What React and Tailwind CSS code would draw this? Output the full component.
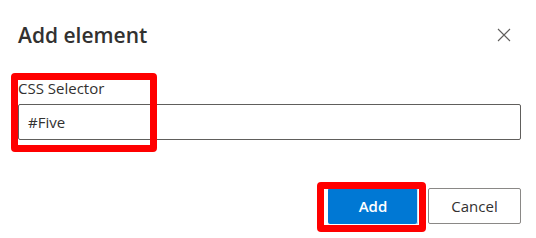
import React from "react";

export default function App() {
  return (
    <div
      className="relative w-[536px] h-[238px] bg-white pl-[18px] pr-[15px] pt-[21px] text-[#323130]"
      style={{ fontFamily: '"Open Sans", "Noto Sans", sans-serif' }}
    >
      <div className="flex items-center justify-between h-[28px]">
        <h1 className="text-[21px] leading-[28px] font-semibold">Add element</h1>
        <button className="w-[32px] h-[32px] flex items-center justify-center mr-[1px] text-[#605e5c]">
          <svg width="14" height="14" viewBox="0 0 14 14" fill="none" stroke="currentColor" strokeWidth="1.1">
            <path d="M1 1 L13 13 M13 1 L1 13" />
          </svg>
        </button>
      </div>

      <label className="block mt-[29px] text-[15px] leading-[20px] font-medium">CSS Selector</label>
      <div className="mt-[6px] h-[36px] border border-[#605e5c] rounded-[2px] flex items-center pl-[9px] text-[15px]">
        #Five
      </div>

      <div className="mt-[48px] flex justify-end gap-[10px]">
        <button className="w-[90px] h-[36px] bg-[#0078d4] text-white text-[15px] font-semibold rounded-[2px] shadow-[inset_-1px_0_0_#cfe4f7]">
          Add
        </button>
        <button className="w-[93px] h-[36px] border border-[#8a8886] rounded-[2px] bg-white text-[15px] font-medium text-[#323130]">
          Cancel
        </button>
      </div>

      <div className="absolute left-[11px] top-[73px] w-[146px] h-[79px] border-[7px] border-[#ff0000] rounded-[4px] pointer-events-none" />
      <div className="absolute left-[317px] top-[182px] w-[109px] h-[50px] border-[7px] border-[#ff0000] rounded-[4px] pointer-events-none" />
    </div>
  );
}
